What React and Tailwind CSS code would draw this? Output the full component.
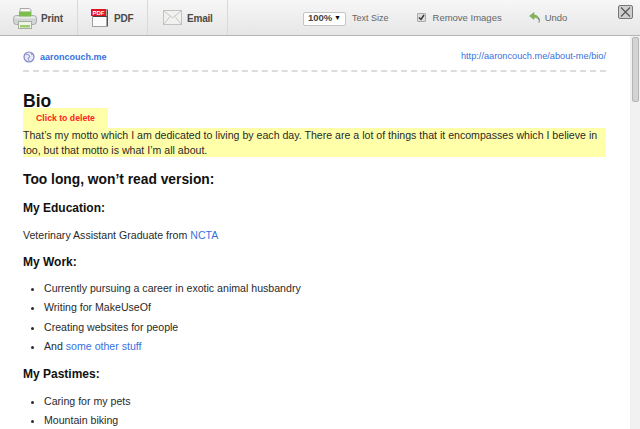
import { Fragment } from "react";

const PrintIcon = () => (
  <svg width="24" height="22" viewBox="0 0 24 22">
    <path d="M7 9V1.500h9.500L18 3v6z" fill="#f6f6f6" stroke="#a8a8a8" />
    <rect x="0.500" y="8.500" width="23" height="9" rx="3" fill="#d2d5d5" stroke="#a5a9a9" />
    <rect x="1.500" y="9.500" width="21" height="2" rx="1" fill="#e9ebeb" />
    <rect x="6" y="4.500" width="12" height="5" fill="#7dbd4b" />
    <rect x="5.500" y="14.500" width="13" height="7" fill="#f0f3ea" stroke="#a6ad9c" />
    <rect x="7" y="18" width="10" height="2.500" fill="#9ccd6d" />
  </svg>
);

const PdfIcon = () => (
  <svg width="18" height="18" viewBox="0 0 18 18">
    <rect x="1.500" y="0.500" width="15" height="17" fill="#fbfbfb" stroke="#a0a0a0" />
    <rect x="0" y="0" width="15" height="7" fill="#e0141c" />
    <text x="1.500" y="5.800" fontSize="6" fontWeight="700" fill="#fff" fontFamily="Liberation Sans, sans-serif">PDF</text>
    <rect x="2" y="7" width="15" height="1" fill="#444" />
    <rect x="15.500" y="1" width="1.500" height="16" fill="#555" />
  </svg>
);

const MailIcon = () => (
  <svg width="19" height="15" viewBox="0 0 19 15">
    <rect x="0.500" y="0.500" width="18" height="14" fill="#f1f1f0" stroke="#c2c2c0" />
    <path d="M1 1l8.500 7L18 1M1 14l6-7.500M18 14l-6-7.500" fill="none" stroke="#c6c6c4" />
  </svg>
);

const ToolBtn = ({ icon, label, className }) => (
  <div className={`flex h-full items-center border-r border-[#d9d9d9] ${className}`}>
    {icon}
    <span className="pt-[2px] text-[10px] font-bold tracking-[-0.2px] text-[#4a4a4a]">{label}</span>
  </div>
);

const Bullets = ({ items }) => (
  <ul className="ml-[21px] list-disc pl-0">
    {items.map((item, i) => (
      <li key={i} className="h-[19.5px] leading-[19.5px]">{item}</li>
    ))}
  </ul>
);

export default function App() {
  return (
    <div className="h-[429px] w-[640px] overflow-hidden bg-white font-['Liberation_Sans',Arial,sans-serif] text-[10.6px] text-[#2a2a2a]">
      {/* toolbar */}
      <div className="relative flex h-[36px] items-center border-b border-[#b4b4b4] bg-gradient-to-b from-[#f7f7f7] to-[#e6e6e6] text-[9.5px] text-[#666]">
        <ToolBtn icon={<PrintIcon />} label="Print" className="w-[78px] gap-[4px] pl-[13px]" />
        <ToolBtn icon={<PdfIcon />} label="PDF" className="w-[70px] gap-[5px] pl-[13px]" />
        <ToolBtn icon={<MailIcon />} label="Email" className="w-[80px] gap-[5px] pl-[15px]" />
        <div className="ml-[75px] mt-[2px] flex h-[14px] w-[43px] items-center justify-between rounded-[2px] border border-[#c5c5c5] bg-white px-[4px] text-[9.5px] font-bold text-[#444]">
          100%
          <span className="text-[7px] text-black">▼</span>
        </div>
        <span className="ml-[6px] mt-[2px] text-[9px]">Text Size</span>
        <div className="ml-[28px] flex h-[9px] w-[9px] items-center justify-center rounded-[1px] border border-[#aaa] bg-[#ddd]">
          <svg width="7" height="7" viewBox="0 0 7 7"><path d="M1 3.500l2 2L6 1" fill="none" stroke="#333" strokeWidth="1.4" /></svg>
        </div>
        <span className="ml-[7px] mt-[2px]">Remove Images</span>
        <svg className="ml-[27px]" width="12" height="11" viewBox="0 0 12 11">
          <path d="M5 .5L.5 4 5 7.500V5.500c2.500 0 4 .5 5 2.500 0-3-2-5-5-5z" fill="#86b558" stroke="#6f9c45" strokeWidth="0.500" />
          <path d="M9.500 6q1.500 2 .5 4.500" fill="none" stroke="#777" />
        </svg>
        <span className="ml-[4px] mt-[2px]">Undo</span>
        {/* close button */}
        <div className="absolute right-[7px] top-[5px] flex h-[14px] w-[15px] items-center justify-center rounded-[2px] border border-[#777] bg-[#cfcfcf]">
          <svg width="11" height="10" viewBox="0 0 11 10"><path d="M1 0.500l9 9M10 0.500l-9 9" stroke="#555" strokeWidth="1.100" /></svg>
        </div>
      </div>

      <div className="flex h-[393px]">
        {/* page */}
        <div className="w-[630px] overflow-hidden pl-[23px] pr-[24px]">
          <div className="flex h-[36px] items-end justify-between border-b-2 border-dashed border-[#dcdcdc] pb-[6px] text-[9.200px] text-[#3572e0]">
            <div className="flex items-center gap-[5px] text-[9px] font-bold">
              <svg width="12" height="12" viewBox="0 0 12 12">
                <circle cx="6" cy="6" r="5" fill="#e8eaf8" stroke="#7d86c4" strokeWidth="1.200" />
                <path d="M3 3l3 1 1 2-2 1 1 3M8 2l1 2" fill="none" stroke="#8d94c8" />
              </svg>
              aaroncouch.me
            </div>
            <span>http://aaroncouch.me/about-me/bio/</span>
          </div>

          <h1 className="mt-[22px] text-[17.500px] font-bold leading-[14px] text-[#111]">Bio</h1>
          <div className="relative flex h-[21px] w-[85px] items-center justify-center bg-[#ffffaa] text-[8.700px] font-bold text-[#ff2020]">
            Click to delete
          </div>
          <p className="-mt-[1px] h-[29px] bg-[#ffffaa] leading-[15px]">
            That’s my motto which I am dedicated to living by each day. There are a lot of things that it encompasses which I believe in too, but that motto is what I’m all about.
          </p>

          <h2 className="mt-[14px] text-[13.800px] font-bold leading-[18px] text-[#111]">Too long, won’t read version:</h2>
          <h3 className="mt-[11.500px] text-[12px] font-bold leading-[15px] text-[#111]">My Education:</h3>
          <p className="mt-[12px] leading-[15px]">
            Veterinary Assistant Graduate from <span className="text-[#3572e0]">NCTA</span>
          </p>
          <h3 className="mt-[12px] text-[12px] font-bold leading-[15px] text-[#111]">My Work:</h3>
          <div className="mt-[9px]">
            <Bullets
              items={[
                "Currently pursuing a career in exotic animal husbandry",
                "Writing for MakeUseOf",
                "Creating websites for people",
                <Fragment key="stuff">And <span className="text-[#3572e0]">some other stuff</span></Fragment>,
              ]}
            />
          </div>
          <h3 className="mt-[10px] text-[12px] font-bold leading-[15px] text-[#111]">My Pastimes:</h3>
          <div className="mt-[10px]">
            <Bullets items={["Caring for my pets", "Mountain biking"]} />
          </div>
        </div>

        {/* scrollbar */}
        <div className="w-[10px] border-l border-[#eee] bg-[#f1f1f1] pl-[1px] pt-[1px]">
          <div className="h-[65px] w-[7px] rounded-[2px] border border-[#b5b5b5] bg-[#d3d3d3]" />
        </div>
      </div>
    </div>
  );
}
